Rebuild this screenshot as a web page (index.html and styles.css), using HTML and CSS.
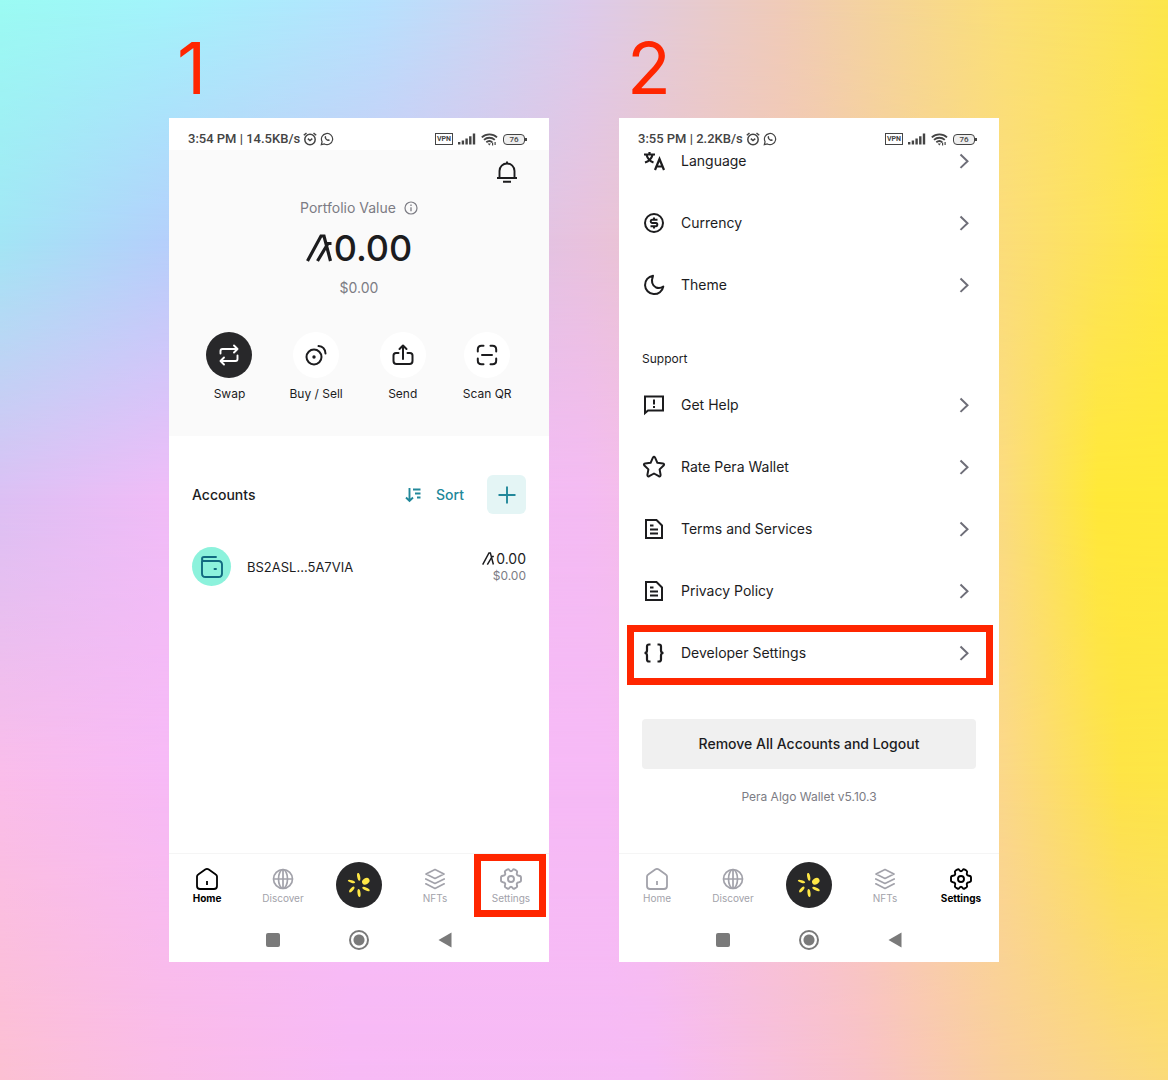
FILE: index.html
```html
<!DOCTYPE html>
<html lang="en">
<head>
<meta charset="utf-8">
<meta name="viewport" content="width=device-width, initial-scale=1">
<title>Pera Wallet: open developer settings</title>
<link rel="stylesheet" href="styles.css">
</head>
<body>
<svg class="defs" aria-hidden="true">
  <symbol id="algo" viewBox="0 0 28 28"><path d="M1.500 27 15 2h3l6.500 25M11.500 27 22 9.500h3.500" fill="none" stroke="currentColor" stroke-width="3.200"/></symbol>
  <symbol id="alarm" viewBox="0 0 14 14"><g fill="none" stroke="currentColor" stroke-width="1.500"><circle cx="7" cy="7.500" r="5.200"/><path d="M.8 3.300 3.500 1M13.200 3.300 10.500 1M4.800 6.600 7 8.500l2.300-1.900"/></g></symbol>
  <symbol id="whatsapp" viewBox="0 0 14 14"><path d="M1.300 12.700l.8-3A5.600 5.600 0 1 1 4.400 12z" fill="none" stroke="currentColor" stroke-width="1.200"/><path d="M4.900 4.200c.5-.5.9-.3 1.100.2.300.7.400.8 0 1.300.4.900 1.100 1.500 2 1.900.5-.5.600-.6 1.200-.2.800.4.800.6.500 1.100-1.700 1.800-6.300-1.900-4.800-4.300z" fill="currentColor"/></symbol>
  <symbol id="signal" viewBox="0 0 18 12"><path d="M0 9h2.400v2.500H0zM3.700 7.500h2.400v4H3.700zM7.400 5.500h2.400v6H7.400zM11.100 3.200h2.400v8.300h-2.400zM14.800.5h2.400v11h-2.400z" fill="currentColor"/></symbol>
  <symbol id="wifi" viewBox="0 0 17 13"><path d="M.8 4.300c4.300-4 11-4 15.200 0M3 6.900c3-2.900 7.700-2.900 10.800 0M5.300 9.300c1.800-1.500 4.400-1.500 6 0" fill="none" stroke="currentColor" stroke-width="1.800"/><path d="M6.700 10.400h3.200l-1.600 2zM11 9.600h1.200v3H11zM13.500 9h1.200v3h-1.200z" fill="currentColor"/></symbol>
  <symbol id="chevron" viewBox="0 0 24 24"><path d="m8.500 5.500 7 6.700-7 6.700" fill="none" stroke="currentColor" stroke-width="2"/></symbol>
  <symbol id="home" viewBox="0 0 24 24"><path d="M2 9.600q0-1.400 1.200-2.200l7-4.900q1.800-1.200 3.600 0l7 4.900Q22 8.200 22 9.600V19q0 3-3 3H5q-3 0-3-3z" fill="none" stroke="currentColor" stroke-width="1.800"/><path d="M12 14v4" stroke="currentColor" stroke-width="1.800"/></symbol>
  <symbol id="globe" viewBox="0 0 24 24"><g fill="none" stroke="currentColor" stroke-width="1.700"><circle cx="12" cy="12" r="9.500"/><ellipse cx="12" cy="12" rx="4.500" ry="9.500"/><path d="M12 2.500v19M2.500 12h19"/></g></symbol>
  <symbol id="layers" viewBox="0 0 24 24"><g fill="none" stroke="currentColor" stroke-width="1.700" stroke-linejoin="round" stroke-linecap="round"><path d="m12 2.500 9 4.600-9 4.400-9-4.400zM2.800 12l9.200 4.500 9.200-4.500M2.800 16.800l9.200 4.700 9.200-4.700"/></g></symbol>
  <symbol id="gear" viewBox="0 0 24 24"><g fill="none" stroke="currentColor" stroke-width="1.900" stroke-linejoin="round"><circle cx="12" cy="12" r="3"/><path d="M8.200 2.600Q9.500 1.800 10.300 3q1.700 2.400 3.400 0 .8-1.200 2.100-.4l1.500.9q1.200.8.700 2.200-1 2.700 1.900 3Q22 9 22 10.400v3.200q0 1.400-2.100 1.700-2.900.3-1.900 3 .5 1.400-.7 2.200l-1.500.9q-1.300.8-2.100-.4-1.700-2.400-3.400 0-.8 1.200-2.100.4l-1.500-.9q-1.200-.8-.7-2.200 1-2.700-1.900-3Q2 15 2 13.600v-3.200Q2 9 4.100 8.700q2.900-.3 1.900-3-.5-1.400.7-2.200z"/></g></symbol>
  <symbol id="pera" viewBox="0 0 24 24"><g fill="#ffe746"><ellipse cx="18.800" cy="8.300" rx="4" ry="3" transform="rotate(-35 18.800 8.300)"/><ellipse cx="11.700" cy="3.800" rx="1.500" ry="4" transform="rotate(-10 11.700 3.800)"/><ellipse cx="4.500" cy="8.400" rx="3.800" ry="1.300" transform="rotate(17 4.500 8.400)"/><ellipse cx="4.800" cy="16.500" rx="3.600" ry="1.500" transform="rotate(-48 4.800 16.500)"/><ellipse cx="12" cy="20" rx="1.500" ry="4" transform="rotate(-8 12 20)"/><ellipse cx="19" cy="16" rx="4" ry="1.500" transform="rotate(25 19 16)"/></g></symbol>
  <symbol id="document" viewBox="0 0 24 24"><g fill="none" stroke="currentColor" stroke-width="2"><path d="M4 3h10.500L20 8.500V21H4z"/><path d="M8 8.500h3.500M8 12.500h8M8 16.500h8"/></g></symbol>
</svg>

<div class="backdrop" aria-hidden="true">
  <div class="band band-1"></div>
  <div class="band band-2"></div>
  <div class="band band-3"></div>
  <div class="band band-4"></div>
  <div class="band band-5"></div>
</div>

<main class="steps">
  <section class="step">
    <h2 class="step-number">1</h2>
    <div class="phone">
      <div class="status">
        <span>3:54 PM | 14.5KB/s</span>
        <svg class="status-icon"><use href="#alarm"/></svg>
        <svg class="status-icon"><use href="#whatsapp"/></svg>
        <span class="status-right">
          <span class="vpn">VPN</span>
          <svg class="signal"><use href="#signal"/></svg>
          <svg class="wifi"><use href="#wifi"/></svg>
          <span class="battery">76</span>
        </span>
      </div>

      <header class="portfolio">
        <button class="bell" aria-label="Notifications"><svg class="icon" viewBox="0 0 24 24"><g fill="none" stroke="currentColor" stroke-width="1.900"><path d="M4.500 17.500V11a7.500 7.500 0 0 1 15 0v6.500M2 18h20M8 21.800h8M12 1.500V4"/></g></svg></button>
        <p class="portfolio-label">Portfolio Value <svg class="info" viewBox="0 0 14 14"><circle cx="7" cy="7" r="6" fill="none" stroke="currentColor" stroke-width="1.200"/><path d="M7 6.200v4M7 3.600V5" stroke="currentColor" stroke-width="1.300"/></svg></p>
        <p class="portfolio-amount"><svg class="algo-large"><use href="#algo"/></svg>0.00</p>
        <p class="portfolio-fiat">$0.00</p>
        <div class="actions">
          <button class="action"><span class="disc disc-dark"><svg class="icon" viewBox="0 0 24 24"><g fill="none" stroke="currentColor" stroke-width="1.900" stroke-linecap="round" stroke-linejoin="round"><path d="M3.500 10.500V8q0-2 2-2H20m-3-3.500L20.500 6 17 9.500M20.500 12.500V16q0 2-2 2H4m3-3.500L3.500 18 7 21.500"/></g></svg></span>Swap</button>
          <button class="action"><span class="disc"><svg class="icon" viewBox="0 0 24 24"><g fill="none" stroke="currentColor" stroke-width="2" stroke-linecap="round"><circle cx="10" cy="14" r="7.500"/><path d="M14.500 3Q21 3.500 21.500 10.500"/></g><circle cx="10" cy="14" r="1.700" fill="currentColor"/></svg></span>Buy / Sell</button>
          <button class="action"><span class="disc"><svg class="icon" viewBox="0 0 24 24"><g fill="none" stroke="currentColor" stroke-width="2" stroke-linecap="round" stroke-linejoin="round"><path d="M7.500 10H5q-2.500 0-2.500 2.500V18q0 3 3 3h13q3 0 3-3v-5.500Q21.500 10 19 10h-2.500M12 16V3M8.500 6 12 2.500 15.500 6"/></g></svg></span>Send</button>
          <button class="action"><span class="disc"><svg class="icon" viewBox="0 0 24 24"><g fill="none" stroke="currentColor" stroke-width="2" stroke-linecap="round"><path d="M2.800 8.500V6.500q0-3.700 3.700-3.700h2M15.500 2.800h2q3.700 0 3.700 3.700v2M21.200 15.500v2q0 3.700-3.700 3.700h-2M8.500 21.200h-2q-3.700 0-3.700-3.700v-2M7 12h10"/></g></svg></span>Scan QR</button>
        </div>
      </header>

      <div class="accounts">
        <div class="accounts-bar">
          <h3 class="accounts-title">Accounts</h3>
          <button class="sort"><svg class="sort-icon" viewBox="0 0 16 16"><path d="M4.500 1v13M1 10.500 4.500 14 8 10.500M8 2.500h7.500M10 6.500h5.500M12 10.500h3.500" fill="none" stroke="currentColor" stroke-width="1.900"/></svg>Sort</button>
          <button class="add" aria-label="Add account"><svg class="icon" viewBox="0 0 24 24"><path d="M12 3.500v17M3.500 12h17" stroke="currentColor" stroke-width="1.900"/></svg></button>
        </div>
        <a class="account" href="#account">
          <span class="avatar"><svg class="icon" viewBox="0 0 24 24"><g fill="none" stroke="currentColor" stroke-width="1.900" stroke-linecap="round"><path d="M2 6v12.500Q2 22 5.500 22h13q3.500 0 3.500-3.500v-9Q22 6 18.500 6H4Q2 6 2 4t2-2h12M14.500 14h1.500"/></g></svg></span>
          <span class="account-name">BS2ASL...5A7VIA</span>
          <span class="account-value"><span class="account-algo"><svg class="algo-small"><use href="#algo"/></svg>0.00</span><span class="account-fiat">$0.00</span></span>
        </a>
      </div>

      <nav class="tabs">
        <a class="tab tab-active" href="#home"><svg class="icon"><use href="#home"/></svg>Home</a>
        <a class="tab" href="#discover"><svg class="icon"><use href="#globe"/></svg>Discover</a>
        <a class="tab tab-pera" href="#pera" aria-label="Pera"><span class="disc disc-dark"><svg class="icon"><use href="#pera"/></svg></span></a>
        <a class="tab" href="#nfts"><svg class="icon"><use href="#layers"/></svg>NFTs</a>
        <a class="tab tab-marked" href="#settings"><svg class="icon"><use href="#gear"/></svg>Settings</a>
      </nav>
      <div class="system"><span class="recent"></span><span class="circle"></span><svg class="back" viewBox="0 0 14 16"><path d="M13.500.500v15L.5 8z" fill="currentColor"/></svg></div>
    </div>
  </section>

  <section class="step">
    <h2 class="step-number">2</h2>
    <div class="phone">
      <div class="status">
        <span>3:55 PM | 2.2KB/s</span>
        <svg class="status-icon"><use href="#alarm"/></svg>
        <svg class="status-icon"><use href="#whatsapp"/></svg>
        <span class="status-right">
          <span class="vpn">VPN</span>
          <svg class="signal"><use href="#signal"/></svg>
          <svg class="wifi"><use href="#wifi"/></svg>
          <span class="battery">76</span>
        </span>
      </div>

      <div class="settings">
        <div class="scrolled">
          <a class="row" href="#language"><svg class="icon" viewBox="0 0 24 24"><g fill="none" stroke="currentColor" stroke-width="2.200"><path d="M2 5.500h11M7.500 3v3M4.500 6q2 6 7 7.500M10.500 6Q9 11.500 3 13.500M13 21l4.500-11L22 21M14.500 17.500h6"/></g></svg><span class="row-label">Language</span><svg class="icon chevron"><use href="#chevron"/></svg></a>
          <a class="row" href="#currency"><svg class="icon" viewBox="0 0 24 24"><g fill="none" stroke="currentColor" stroke-width="2"><circle cx="12" cy="12" r="9"/><path d="M15.500 8.800H10q-1.300 0-1.300 1.500T10 12h4q1.300 0 1.300 1.600T14 15.200H8.500M12 6.500v2.300M12 15.200v2.300"/></g></svg><span class="row-label">Currency</span><svg class="icon chevron"><use href="#chevron"/></svg></a>
          <a class="row" href="#theme"><svg class="icon" viewBox="0 0 24 24"><path d="M11 2.800A9.200 9.200 0 1 0 21.300 13.500Q18 16 14 14.500 8 11 11 2.800z" fill="none" stroke="currentColor" stroke-width="2" stroke-linejoin="round"/></svg><span class="row-label">Theme</span><svg class="icon chevron"><use href="#chevron"/></svg></a>
          <h3 class="group-title">Support</h3>
          <a class="row" href="#help"><svg class="icon" viewBox="0 0 24 24"><g fill="none" stroke="currentColor" stroke-width="2"><path d="M3 20V3.500h18V17.500H6z"/><path d="M12 6.500v5M12 13v2"/></g></svg><span class="row-label">Get Help</span><svg class="icon chevron"><use href="#chevron"/></svg></a>
          <a class="row" href="#rate"><svg class="icon" viewBox="0 0 24 24"><path d="M10.900 2.700q1.100-1.700 2.200 0l2.300 5.100 5.500.7q2 .5.700 2l-4 3.900 1 5.500q.1 2-1.800 1.300L12 18.500l-4.800 2.700q-1.900.7-1.800-1.300l1-5.500-4-3.900q-1.300-1.500.7-2l5.500-.7z" fill="none" stroke="currentColor" stroke-width="2" stroke-linejoin="round"/></svg><span class="row-label">Rate Pera Wallet</span><svg class="icon chevron"><use href="#chevron"/></svg></a>
          <a class="row" href="#terms"><svg class="icon"><use href="#document"/></svg><span class="row-label">Terms and Services</span><svg class="icon chevron"><use href="#chevron"/></svg></a>
          <a class="row" href="#privacy"><svg class="icon"><use href="#document"/></svg><span class="row-label">Privacy Policy</span><svg class="icon chevron"><use href="#chevron"/></svg></a>
          <a class="row row-marked" href="#developer"><svg class="icon" viewBox="0 0 24 24"><path d="M8.500 3.500H7q-2 0-2 2v4Q5 12 2.500 12 5 12 5 14.500v4q0 2 2 2h1.500M15.500 3.500H17q2 0 2 2v4q0 2.500 2.500 2.500Q19 12 19 14.500v4q0 2-2 2h-1.500" fill="none" stroke="currentColor" stroke-width="2.200"/></svg><span class="row-label">Developer Settings</span><svg class="icon chevron"><use href="#chevron"/></svg></a>
          <button class="logout">Remove All Accounts and Logout</button>
          <p class="version">Pera Algo Wallet v5.10.3</p>
        </div>
      </div>

      <nav class="tabs">
        <a class="tab" href="#home"><svg class="icon"><use href="#home"/></svg>Home</a>
        <a class="tab" href="#discover"><svg class="icon"><use href="#globe"/></svg>Discover</a>
        <a class="tab tab-pera" href="#pera" aria-label="Pera"><span class="disc disc-dark"><svg class="icon"><use href="#pera"/></svg></span></a>
        <a class="tab" href="#nfts"><svg class="icon"><use href="#layers"/></svg>NFTs</a>
        <a class="tab tab-active" href="#settings"><svg class="icon"><use href="#gear"/></svg>Settings</a>
      </nav>
      <div class="system"><span class="recent"></span><span class="circle"></span><svg class="back" viewBox="0 0 14 16"><path d="M13.500.500v15L.5 8z" fill="currentColor"/></svg></div>
    </div>
  </section>
</main>
</body>
</html>
```
FILE: styles.css
```css
* { box-sizing: border-box; }

body {
  margin: 0;
  min-height: 100vh;
  position: relative;
  background: #f6bbf5;
  color: #1c1c1e;
  font-family: Inter, "Noto Sans", sans-serif;
  font-size: 14px;
  line-height: 20px;
}

h2, h3, p { margin: 0; }
a { color: inherit; text-decoration: none; }
button { border: 0; padding: 0; background: none; color: inherit; font: inherit; }
svg { display: block; flex: none; }

.defs { position: absolute; width: 0; height: 0; }
.icon { width: 24px; height: 24px; }

/* Backdrop: colour bands that fade into each other from top to bottom */
.backdrop { position: absolute; inset: 0; z-index: -1; overflow: hidden; }
.band { position: absolute; inset: 0; }
.band-1 { background: linear-gradient(90deg, #9bfbf3, #a3f4fb 14%, #b6e2fe 32%, #dccbec 50%, #f0cbb8 67%, #fbdf78 86%, #fce64c); }
.band-2 {
  background: linear-gradient(90deg, #a2e6f5, #b4d0fb 14%, #d4c6f2 35%, #e8c2dd 50%, #f4cab0 70%, #fbdd79 86%, #ffe844);
  mask-image: linear-gradient(transparent, #000 22%);
}
.band-3 {
  background: linear-gradient(90deg, #dcc0f4, #f0bcf7 14%, #f4bbf3 50%, #f8c6c4 70%, #fbdc7e 86%, #ffe938 94%, #ffea38);
  mask-image: linear-gradient(transparent 22%, #000 46%);
}
.band-4 {
  background: linear-gradient(90deg, #fabdea, #f7baf6 14%, #f6baf6 52%, #f8c4c8 70%, #fbd888 86%, #fee446 96%, #fde646);
  mask-image: linear-gradient(transparent 46%, #000 72%);
}
.band-5 {
  background: linear-gradient(90deg, #fcc0d2, #fabce6 14%, #f7baf5 30%, #f6bbf4 56%, #f8c2c8 74%, #f9cf9c 86%, #fbda78);
  mask-image: linear-gradient(transparent 72%, #000);
}

.steps {
  display: grid;
  grid-template-columns: 1fr 1fr;
  gap: 70px;
  max-width: 830px;
  margin: 0 auto;
  padding-top: 28px;
}
.step { display: flex; flex-direction: column; }
.step-number {
  padding-left: 8px;
  color: #ff2600;
  font: 400 72px/80px Inter, "Liberation Sans", sans-serif;
  margin-bottom: 10px;
}
.phone { flex: 1; display: flex; flex-direction: column; background: #fff; }

/* Status bar */
.status {
  display: flex;
  align-items: center;
  gap: 3px;
  padding: 10px 24px 0 19px;
  height: 32px;
  color: #444;
  font: 500 13px/22px Roboto, sans-serif;
}
.status-icon { width: 14px; height: 14px; }
.status-right { display: flex; align-items: center; gap: 5px; margin-left: auto; }
.vpn { padding: 0 1px; border: 1px solid; font-size: 7px; line-height: 10px; font-weight: 700; }
.signal { width: 18px; height: 12px; }
.wifi { width: 17px; height: 13px; }
.battery {
  position: relative;
  width: 22px;
  border: 1px solid;
  border-radius: 4px;
  background: #eee;
  font-size: 8px;
  line-height: 9px;
  text-align: center;
}
.battery::after { content: ""; position: absolute; right: -3px; top: 3px; width: 2px; height: 3px; background: currentColor; }

/* Portfolio */
.portfolio { display: flex; flex-direction: column; align-items: center; padding: 10px 0 32px; background: #fafafa; }
.bell { align-self: flex-end; margin-right: 30px; }
.portfolio-label { display: flex; align-items: center; gap: 8px; margin-top: 14px; color: #7c7c84; }
.info { width: 14px; height: 14px; }
.portfolio-amount { display: flex; align-items: center; margin-top: 10px; font-size: 36px; font-weight: 500; line-height: 40px; }
.algo-large { width: 28px; height: 28px; }
.portfolio-fiat { margin-top: 10px; color: #7c7c84; }
.actions { display: flex; gap: 37px; margin-top: 34px; }
.action { display: flex; flex-direction: column; align-items: center; gap: 6px; font-size: 12px; line-height: 20px; }
.disc { display: grid; place-items: center; width: 46px; height: 46px; border-radius: 50%; background: #fff; }
.disc-dark { background: #28282a; color: #fff; }

/* Accounts */
.accounts { flex: 1; padding: 39px 23px 0; }
.accounts-bar { display: flex; align-items: center; gap: 23px; }
.accounts-title { flex: 1; font-size: 14px; font-weight: 500; }
.sort { display: flex; align-items: center; gap: 15px; color: #22889a; font-weight: 500; }
.sort-icon { width: 16px; height: 16px; }
.add { display: grid; place-items: center; width: 39px; height: 39px; border-radius: 6px; background: #e4f5f5; color: #22889a; }
.account { display: flex; align-items: center; gap: 16px; margin-top: 33px; }
.avatar { display: grid; place-items: center; width: 39px; height: 39px; border-radius: 50%; background: #8cf2dc; color: #116a80; }
.account-name { flex: 1; font-size: 13px; }
.account-value { display: flex; flex-direction: column; align-items: flex-end; line-height: 17px; }
.account-algo { display: flex; align-items: center; gap: 1px; }
.algo-small { width: 13px; height: 13px; }
.account-fiat { color: #7c7c84; font-size: 12px; }

/* Settings list, scrolled a little under the status bar */
.settings { flex: 1; overflow: hidden; }
.scrolled { display: flex; flex-direction: column; margin-top: -20px; padding-bottom: 46px; }
.row { position: relative; display: flex; align-items: center; gap: 15px; height: 62px; padding: 0 23px; }
.row-label { flex: 1; }
.chevron { color: #6e6e78; }
.row-marked::after { content: ""; position: absolute; inset: 3px 6px -1px 8px; border: 7px solid #ff2600; }
.group-title { padding: 33px 23px 5px; font-size: 12px; font-weight: 400; }
.logout { margin: 35px 23px 0; padding: 15px; border-radius: 4px; background: #f0f0f0; font-weight: 500; }
.version { margin-top: 18px; color: #7c7c84; font-size: 12px; text-align: center; }

/* Tab bar */
.tabs { display: grid; grid-template-columns: repeat(5, 1fr); height: 64px; border-top: 1px solid #f5f5f5; }
.tab { position: relative; display: flex; flex-direction: column; align-items: center; padding-top: 13px; color: #a2a2aa; font-size: 10px; line-height: 14px; }
.tab-active { color: #000; font-weight: 700; }
.tab-pera { padding-top: 8px; }
.tab-marked::after { content: ""; position: absolute; inset: 0 3px 0 1px; border: 7px solid #ff2600; }

/* Android navigation */
.system { display: flex; align-items: center; justify-content: center; gap: 69px; height: 45px; color: #7a7a7a; }
.recent { width: 14px; height: 14px; border-radius: 2px; background: currentColor; }
.circle { width: 20px; height: 20px; border: 2px solid; border-radius: 50%; background: radial-gradient(circle, currentColor 5px, transparent 6px); }
.back { width: 14px; height: 16px; }
```
